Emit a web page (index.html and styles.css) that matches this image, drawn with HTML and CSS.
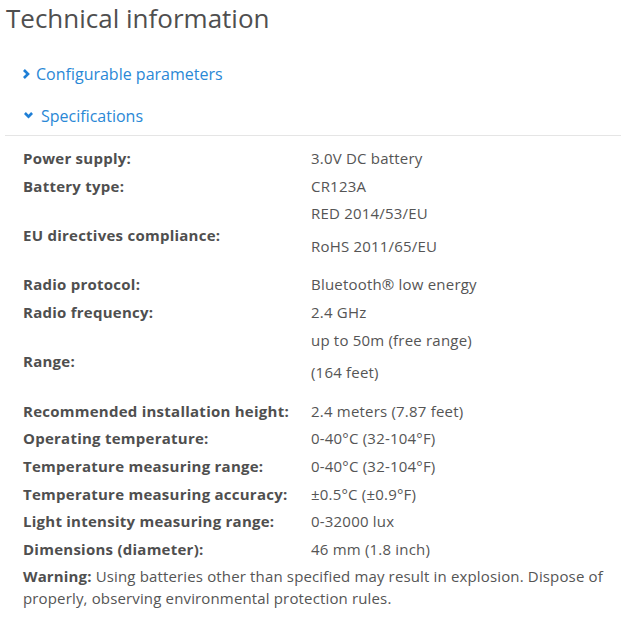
FILE: index.html
```html
<!DOCTYPE html>
<html lang="en">
<head>
<meta charset="utf-8">
<title>Technical information</title>
<link rel="stylesheet" href="styles.css">
</head>
<body>
<div class="page">
  <h2 class="title">Technical information</h2>
  <div class="accordion">
    <a class="acc-head" href="#">
      <span class="icon icon-right"><svg width="7" height="10" viewBox="0 0 7 10"><polygon points="0,1.9 1.9,0 6.9,5 1.9,10 0,8.1 3.1,5" fill="currentColor"/></svg></span>Configurable parameters
    </a>
    <a class="acc-head open" href="#">
      <span class="icon icon-down"><svg width="9" height="7" viewBox="0 0 9 7"><polygon points="0,1.9 1.9,0 4.5,2.7 7.1,0 9,1.9 4.5,6.6" fill="currentColor"/></svg></span>Specifications
    </a>
  </div>
  <div class="specs">
    <table class="spec-table">
      <tbody>
        <tr><th>Power supply:</th><td>3.0V DC battery</td></tr>
        <tr><th>Battery type:</th><td>CR123A</td></tr>
        <tr><th>EU directives compliance:</th><td><p>RED 2014/53/EU</p><p>RoHS 2011/65/EU</p></td></tr>
        <tr><th>Radio protocol:</th><td>Bluetooth® low energy</td></tr>
        <tr><th>Radio frequency:</th><td>2.4 GHz</td></tr>
        <tr><th>Range:</th><td><p>up to 50m (free range)</p><p>(164 feet)</p></td></tr>
        <tr><th>Recommended installation height:</th><td>2.4 meters (7.87 feet)</td></tr>
        <tr><th>Operating temperature:</th><td>0-40°C (32-104°F)</td></tr>
        <tr><th>Temperature measuring range:</th><td>0-40°C (32-104°F)</td></tr>
        <tr><th>Temperature measuring accuracy:</th><td>±0.5°C (±0.9°F)</td></tr>
        <tr><th>Light intensity measuring range:</th><td>0-32000 lux</td></tr>
        <tr><th>Dimensions (diameter):</th><td>46 mm (1.8 inch)</td></tr>
      </tbody>
    </table>
    <p class="warning"><strong>Warning:</strong> Using batteries other than specified may result in explosion. Dispose of properly, observing environmental protection rules.</p>
  </div>
</div>
</body>
</html>
```
FILE: styles.css
```css
* { box-sizing: border-box; }
html, body {
  margin: 0;
  padding: 0;
  background: #ffffff;
}
body {
  font-family: "Open Sans", "Liberation Sans", sans-serif;
  color: #555555;
  font-size: 15px;
}
.page {
  padding-left: 5px;
}
.title {
  margin: 0 0 17px 0;
  padding-left: 1px;
  font-size: 26px;
  font-weight: 400;
  line-height: 36px;
  color: #4f4f4f;
}
.accordion {
  display: flex;
  flex-direction: column;
}
.acc-head {
  display: flex;
  align-items: center;
  padding: 11px 0 10px 18px;
  font-size: 16px;
  line-height: 21px;
  color: #2a88d6;
  text-decoration: none;
}
.acc-head.open {
  border-bottom: 1px solid #e5e5e5;
  padding-bottom: 8px;
}
.icon {
  display: inline-flex;
  align-items: center;
  color: #1f7fd6;
}
.icon-right {
  width: 13px;
  padding-bottom: 2px;
}
.icon-down {
  width: 18px;
  padding-left: 1px;
  padding-bottom: 3px;
}
.specs {
  padding-left: 18px;
  padding-top: 9px;
}
.spec-table {
  border-collapse: collapse;
  border-spacing: 0;
  line-height: 19.6px;
}
.spec-table th,
.spec-table td {
  padding: 4px 0;
  vertical-align: middle;
  text-align: left;
}
.spec-table th {
  width: 288px;
  font-weight: 700;
  letter-spacing: 0.25px;
  color: #4f4f4f;
}
.spec-table td {
  font-weight: 400;
  letter-spacing: 0.2px;
}
.spec-table p {
  margin: 0 0 13px 0;
}
.spec-table p:last-child {
  margin-bottom: 11px;
}
.warning {
  margin: 2px 0 0 0;
  line-height: 22px;
  letter-spacing: 0.15px;
}
.warning strong {
  color: #4f4f4f;
}
```
